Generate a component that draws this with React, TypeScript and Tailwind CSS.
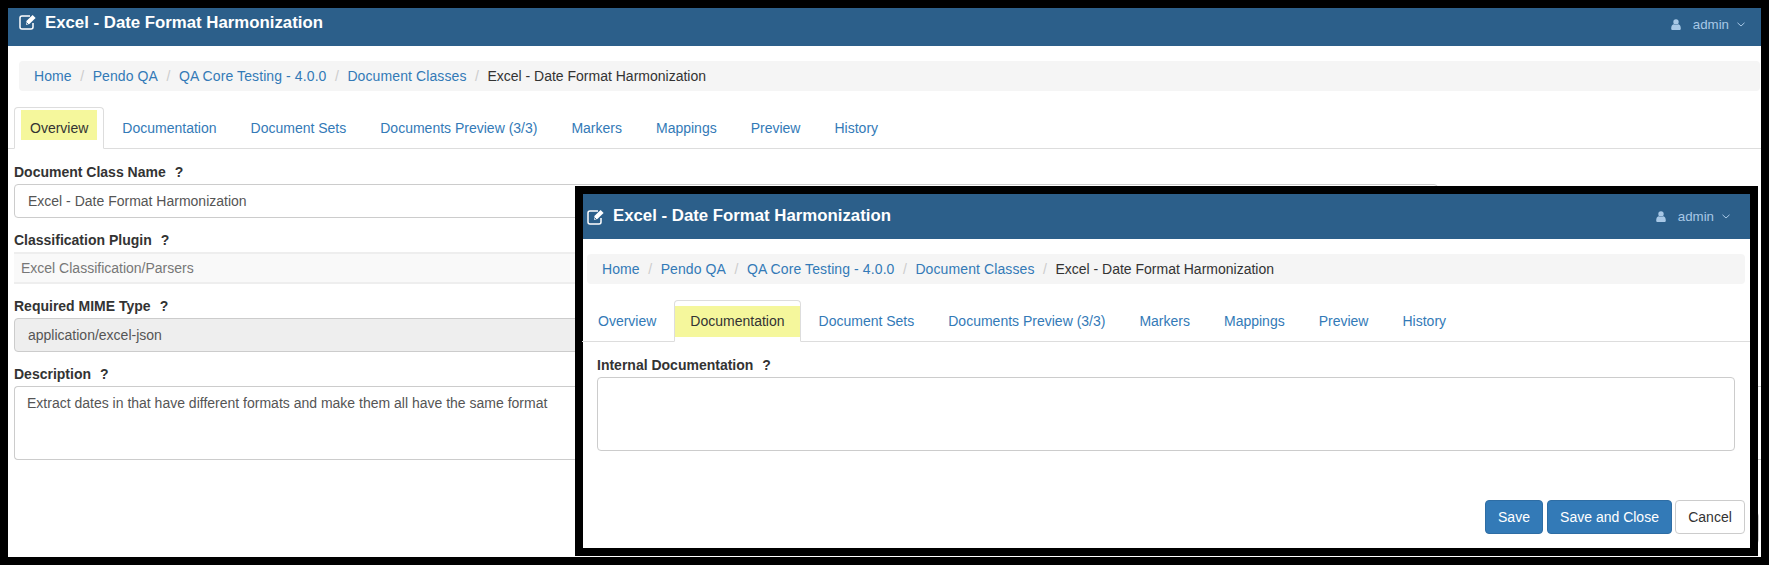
import React from "react";

const TITLE = "Excel - Date Format Harmonization";
const FONT = "font-['Liberation_Sans',Arial,sans-serif]";

function Help() {
  return <span className="ml-[9px] font-bold">?</span>;
}

function Chevron() {
  return (
    <svg width="8" height="5" viewBox="0 0 8 5" fill="none" stroke="#a8c8e6" strokeWidth="1">
      <path d="M0.5 0.8 L4 4 L7.5 0.8" />
    </svg>
  );
}

function EditIcon({ className }: { className: string }) {
  return (
    <svg width="18" height="16" viewBox="0 0 18 16" className={"shrink-0 " + className}>
      <path
        d="M11 2 H3 A2 2 0 0 0 1 4 V13 A2 2 0 0 0 3 15 H12 A2 2 0 0 0 14 13 V9"
        fill="none"
        stroke="#fff"
        strokeWidth="1.5"
      />
      <path d="M13.6 0.9 L16.6 3.9 L10.4 10.1 L7.2 11 L7.4 7.1 Z" fill="#fff" />
      <path d="M7.6 8.6 L9.2 10.4" stroke="#2c5f8a" strokeWidth="1" fill="none" />
    </svg>
  );
}

function UserIcon() {
  return (
    <svg width="10" height="11" viewBox="0 0 10 11" fill="#a8c8e6" className="shrink-0">
      <circle cx="5" cy="2.9" r="2.7" />
      <path d="M0.2 9.4 C0.2 7 1.2 5.6 2.6 5.3 C3.9 6.2 6.1 6.2 7.4 5.3 C8.8 5.6 9.8 7 9.8 9.4 C9.8 10.4 9.2 11 8.3 11 H1.7 C0.8 11 0.2 10.4 0.2 9.4 Z" />
    </svg>
  );
}

function TopBar({
  barClass,
  iconClass,
  userClass,
}: {
  barClass: string;
  iconClass: string;
  userClass: string;
}) {
  return (
    <div className={barClass}>
      <EditIcon className={iconClass} />
      <h1 className="ml-[8px] text-[16.8px] leading-none font-bold text-white">{TITLE}</h1>
      <div className={"ml-auto flex items-center text-[#a8c8e6] " + userClass}>
        <UserIcon />
        <span className="ml-[12px] text-[13.3px] leading-none">admin</span>
        <span className="ml-[8px] flex">
          <Chevron />
        </span>
      </div>
    </div>
  );
}

function Crumbs({ className }: { className: string }) {
  const links = ["Home", "Pendo QA", "QA Core Testing - 4.0.0", "Document Classes"];
  return (
    <nav className={className}>
      {links.map((l) => (
        <React.Fragment key={l}>
          <a className="tracking-[0.1px] text-[#337ab7]">{l}</a>
          <span className="px-[8.5px] text-[#ccc]">/</span>
        </React.Fragment>
      ))}
      <span className="text-[#333]">{TITLE}</span>
    </nav>
  );
}

const TAB_NAMES = [
  "Overview",
  "Documentation",
  "Document Sets",
  "Documents Preview (3/3)",
  "Markers",
  "Mappings",
  "Preview",
  "History",
];

function Tabs({
  active,
  stripClass,
  mark,
}: {
  active: string;
  stripClass: string;
  mark: string;
}) {
  return (
    <ul className={stripClass}>
      {TAB_NAMES.map((t) => {
        const on = t === active;
        return (
          <li
            key={t}
            className={
              "mr-[2px] -mb-px rounded-t-[4px] border px-[15px] py-[10px] text-[14px] leading-[20px] " +
              (on ? "border-[#ddd] border-b-white bg-white" : "border-transparent")
            }
          >
            {on ? <span className={mark}>{t}</span> : <a className="text-[#337ab7]">{t}</a>}
          </li>
        );
      })}
    </ul>
  );
}

function Label({ children }: { children: React.ReactNode }) {
  return (
    <label className="mb-[2px] block text-[14px] leading-[20px] font-bold text-[#333]">
      {children}
      <Help />
    </label>
  );
}

export default function App() {
  return (
    <div className={"relative h-[565px] w-[1769px] overflow-hidden bg-black pt-[8px] pl-[8px] " + FONT}>
      {/* Page behind */}
      <div className="h-[549px] w-[1753px] overflow-hidden bg-white">
        <TopBar
          barClass="flex h-[38px] items-center bg-[#2c5f8a] pl-[11px] pr-[16px] pb-[7px]"
          iconClass="-mt-[3px]"
          userClass="mt-[3px]"
        />
        <Crumbs className="mt-[15px] ml-[11px] mr-[1px] flex h-[30px] items-center rounded-[4px] bg-[#f5f5f5] pl-[15px] text-[14px]" />
        <Tabs
          active="Overview"
          stripClass="mt-[16px] flex h-[42px] border-b border-[#ddd] pl-[6px]"
          mark="-mx-[9px] -mt-[8px] -mb-[2px] inline-block bg-[#f5f79c] px-[9px] pt-[8px] pb-[2px] text-[#333]"
        />
        <form className="mt-[13px] pl-[6px]">
          <Label>Document Class Name</Label>
          <div className="flex h-[34px] w-[1424px] items-center rounded-[4px] border border-[#ccc] pl-[13px] text-[14px] text-[#555]">
            {TITLE}
          </div>
          <div className="mt-[12px]">
            <Label>Classification Plugin</Label>
            <div className="flex h-[32px] w-[1424px] items-center border-y-2 border-[#eee] bg-[#f9f9f9] pl-[7px] text-[14px] text-[#777]">
              Excel Classification/Parsers
            </div>
          </div>
          <div className="mt-[12px]">
            <Label>Required MIME Type</Label>
            <div className="flex h-[34px] w-[1424px] items-center rounded-[4px] border border-[#ccc] bg-[#eee] pl-[13px] text-[14px] text-[#555]">
              application/excel-json
            </div>
          </div>
          <div className="mt-[12px]">
            <Label>Description</Label>
            <div className="h-[74px] rounded-l-[4px] border border-r-0 border-[#ccc] pl-[12px] pt-[6px] text-[14px] leading-[20px] text-[#555]">
              Extract dates in that have different formats and make them all have the same format
            </div>
          </div>
          <div className="mt-[52px] flex justify-end pr-[2px]">
            <div className="h-[32px] w-[70px] rounded-[4px] border border-[#ccc] bg-white" />
          </div>
        </form>
      </div>

      {/* Overlaid window */}
      <div className="absolute top-[186px] left-[575px] h-[370px] w-[1183px] border-[8px] border-black bg-white">
        <TopBar
          barClass="flex h-[45px] items-center bg-[#2c5f8a] pl-[4px] pr-[20px]"
          iconClass=""
          userClass=""
        />
        <Crumbs className="mt-[15px] ml-[4px] mr-[5px] flex h-[30px] items-center rounded-[4px] bg-[#f5f5f5] pl-[15px] text-[14px]" />
        <Tabs
          active="Documentation"
          stripClass="mt-[16px] flex h-[42px] border-b border-[#ddd] -ml-[1px]"
          mark="-mx-[15px] -mt-[5px] -mb-[6px] inline-block bg-[#f5f79c] px-[15px] pt-[5px] pb-[6px] text-[#333]"
        />
        <div className="mt-[13px] pl-[14px] pr-[15px]">
          <Label>Internal Documentation</Label>
          <div className="h-[74px] rounded-[4px] border border-[#ccc]" />
        </div>
        <div className="mt-[49px] flex justify-end pr-[5px]">
          <button type="button" className="h-[34px] w-[58px] rounded-[4px] border border-[#2e6da4] bg-[#337ab7] text-[14px] text-white">
            Save
          </button>
          <button type="button" className="ml-[4px] h-[34px] w-[125px] rounded-[4px] border border-[#2e6da4] bg-[#337ab7] text-[14px] text-white">
            Save and Close
          </button>
          <button type="button" className="ml-[3px] h-[34px] w-[70px] rounded-[4px] border border-[#ccc] bg-white text-[14px] text-[#333]">
            Cancel
          </button>
        </div>
      </div>
    </div>
  );
}
